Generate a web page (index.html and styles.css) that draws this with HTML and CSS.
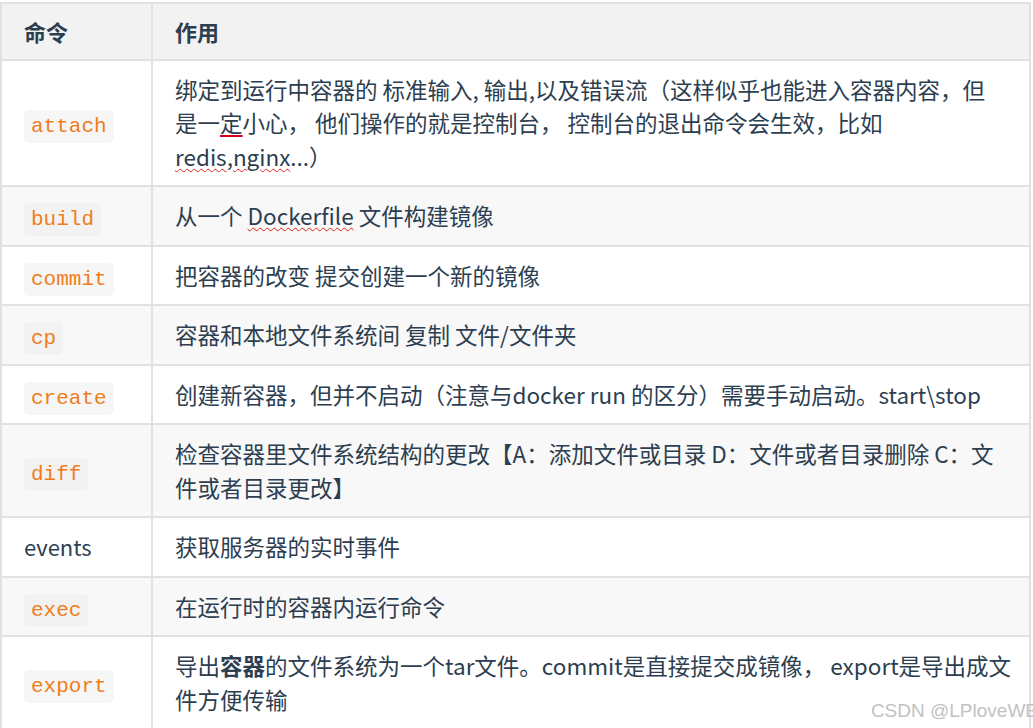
FILE: index.html
```html
<!DOCTYPE html>
<html lang="zh-CN">
<head>
<meta charset="utf-8">
<title>Docker 命令</title>
<link rel="stylesheet" href="styles.css">
</head>
<body>
<div class="page">
  <table class="cmd-table">
    <colgroup>
      <col class="col-cmd">
      <col class="col-desc">
    </colgroup>
    <thead>
      <tr>
        <th>命令</th>
        <th>作用</th>
      </tr>
    </thead>
    <tbody>
      <tr>
        <td class="cmd"><code>attach</code></td>
        <td class="desc">绑定到运行中容器的 标准输入, 输出,以及错误流（这样似乎也能进入容器内容，但<br>是一<span class="ime">定</span>小心， 他们操作的就是控制台， 控制台的退出命令会生效，比如<br><span class="spell">redis</span>,<span class="spell">nginx</span>...）</td>
      </tr>
      <tr>
        <td class="cmd"><code>build</code></td>
        <td class="desc">从一个 <span class="spell">Dockerfile</span> 文件构建镜像</td>
      </tr>
      <tr>
        <td class="cmd"><code>commit</code></td>
        <td class="desc">把容器的改变 提交创建一个新的镜像</td>
      </tr>
      <tr>
        <td class="cmd"><code>cp</code></td>
        <td class="desc">容器和本地文件系统间 复制 文件/文件夹</td>
      </tr>
      <tr>
        <td class="cmd"><code>create</code></td>
        <td class="desc">创建新容器，但并不启动（注意与docker run 的区分）需要手动启动。start\stop</td>
      </tr>
      <tr>
        <td class="cmd"><code>diff</code></td>
        <td class="desc">检查容器里文件系统结构的更改【A：添加文件或目录 D：文件或者目录删除 C：文<br>件或者目录更改】</td>
      </tr>
      <tr>
        <td class="cmd">events</td>
        <td class="desc">获取服务器的实时事件</td>
      </tr>
      <tr>
        <td class="cmd"><code>exec</code></td>
        <td class="desc">在运行时的容器内运行命令</td>
      </tr>
      <tr>
        <td class="cmd"><code>export</code></td>
        <td class="desc">导出<strong>容器</strong>的文件系统为一个tar文件。commit是直接提交成镜像， export是导出成文<br>件方便传输</td>
      </tr>
    </tbody>
  </table>
  <div class="watermark">CSDN @LPloveWB</div>
</div>
</body>
</html>
```
FILE: styles.css
```css
html, body {
  margin: 0;
  padding: 0;
  background: #ffffff;
}

.page {
  position: relative;
  width: 1033px;
  height: 728px;
  overflow: hidden;
  padding-top: 2px;
  box-sizing: border-box;
}

.cmd-table {
  width: 1031px;
  border-collapse: collapse;
  font-family: "Noto Sans CJK SC", "Lato", sans-serif;
  font-size: 22.5px;
  line-height: 33.5px;
  color: #2c3e50;
  table-layout: fixed;
}

.col-cmd {
  width: 151px;
}

.cmd-table th,
.cmd-table td {
  border: 2px solid #dfe2e5;
  padding: 12px 8px 12px 22px;
  text-align: left;
  vertical-align: middle;
  white-space: nowrap;
}

.cmd-table th {
  background: #f2f2f2;
  font-weight: bold;
  font-size: 22px;
  padding-top: 11px;
  padding-bottom: 10px;
}

.cmd-table tbody tr:nth-child(even) td {
  background: #f8f8f8;
}

.cmd-table tbody tr:nth-child(odd) td {
  background: #ffffff;
}

.cmd-table td.cmd {
  font-size: 22px;
}

.cmd-table code {
  font-family: "Liberation Mono", monospace;
  font-size: 21px;
  line-height: 20px;
  color: #ef7d1c;
  background: #f6f6f6;
  border-radius: 5px;
  padding: 5px 7px;
}

.cmd-table tbody tr:nth-child(even) td code {
  background: #f2f2f2;
}

.spell {
  text-decoration: underline wavy #e0201b;
  text-decoration-thickness: 1px;
  text-underline-offset: 2px;
}

.ime {
  text-decoration: underline solid #d3001c;
  text-decoration-thickness: 2px;
  text-underline-offset: 3px;
}

.watermark {
  position: absolute;
  right: -5px;
  bottom: 6px;
  font-family: "Liberation Sans", Arial, sans-serif;
  font-size: 19px;
  color: #c2c2c2;
}
```
